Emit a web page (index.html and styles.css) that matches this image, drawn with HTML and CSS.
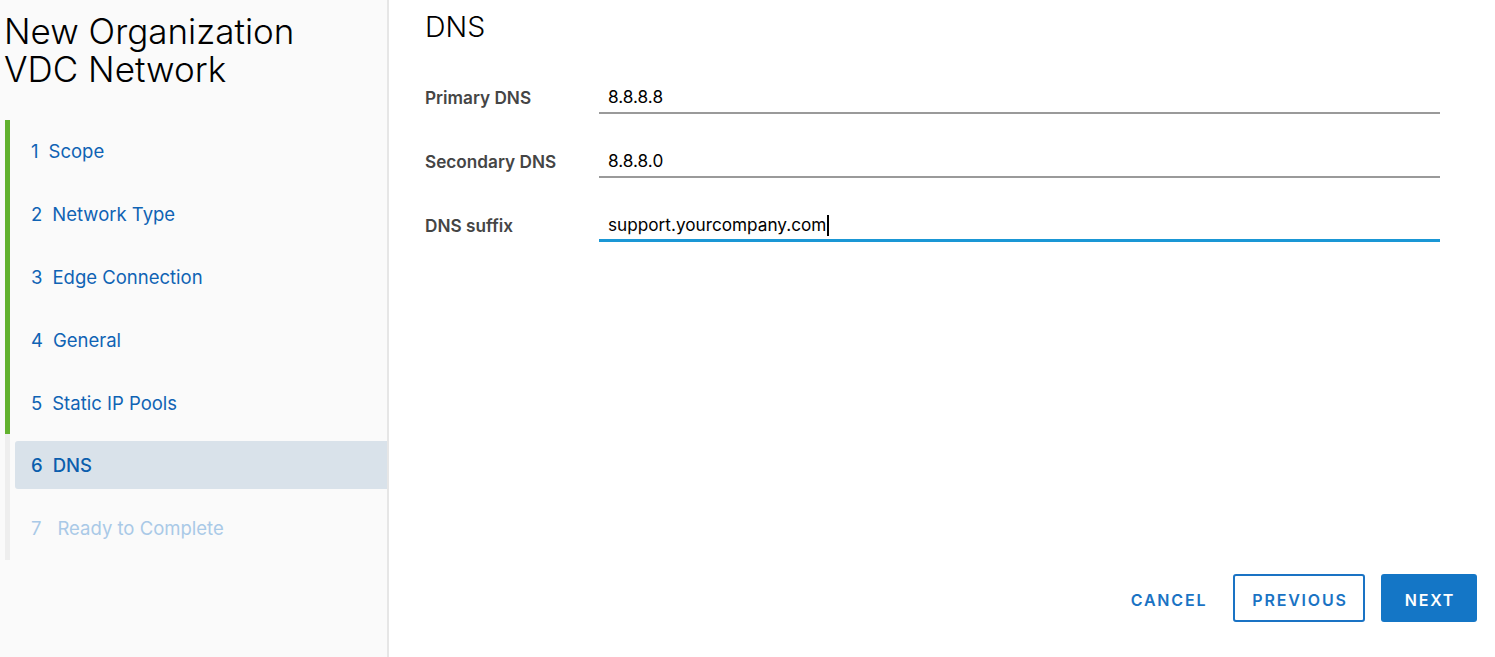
FILE: index.html
```html
<!DOCTYPE html>
<html lang="en">
<head>
<meta charset="utf-8">
<title>New Organization VDC Network</title>
<link rel="stylesheet" href="styles.css">
</head>
<body>
<div class="wizard">
  <aside class="sidebar">
    <h1 class="title">New Organization<br>VDC Network</h1>
    <nav class="steps">
      <div class="step done"><a class="link"><span class="num">1</span>Scope</a></div>
      <div class="step done"><a class="link"><span class="num">2</span>Network Type</a></div>
      <div class="step done"><a class="link"><span class="num">3</span>Edge Connection</a></div>
      <div class="step done"><a class="link"><span class="num">4</span>General</a></div>
      <div class="step done"><a class="link"><span class="num">5</span>Static IP Pools</a></div>
      <div class="step"><a class="link active"><span class="num">6</span>DNS</a></div>
      <div class="step"><a class="link disabled"><span class="num wide">7</span>Ready to Complete</a></div>
    </nav>
  </aside>
  <main class="content">
    <h2 class="heading">DNS</h2>
    <form class="form">
      <div class="row">
        <label class="label">Primary DNS</label>
        <div class="field"><span class="value">8.8.8.8</span></div>
      </div>
      <div class="row">
        <label class="label">Secondary DNS</label>
        <div class="field"><span class="value">8.8.8.0</span></div>
      </div>
      <div class="row">
        <label class="label">DNS suffix</label>
        <div class="field focused"><span class="value">support.yourcompany.com</span><span class="caret"></span></div>
      </div>
    </form>
    <div class="actions">
      <button class="btn btn-link" type="button">CANCEL</button>
      <button class="btn btn-outline" type="button">PREVIOUS</button>
      <button class="btn btn-primary" type="button">NEXT</button>
    </div>
  </main>
</div>
</body>
</html>
```

FILE: styles.css
```css
* { box-sizing: border-box; }
html, body { margin: 0; height: 100%; }
body {
  font-family: Inter, "Noto Sans", sans-serif;
  background: #ffffff;
  color: #000;
  overflow: hidden;
}
.wizard {
  display: flex;
  height: 657px;
}
.sidebar {
  width: 389px;
  flex: 0 0 389px;
  background: #fafafa;
  border-right: 2px solid #e6e6e6;
  padding-top: 12px;
}
.title {
  margin: 0 0 32px 0;
  padding-left: 4px;
  font-size: 35px;
  line-height: 38px;
  font-weight: 300;
  color: #000;
  letter-spacing: 0;
}
.steps {
  display: flex;
  flex-direction: column;
  margin-left: 5px;
}
.step {
  height: 62.8px;
  border-left: 5px solid #eeeeee;
  padding-left: 5px;
  display: flex;
  align-items: center;
}
.step.done { border-left-color: #62b22f; }
.link {
  flex: 1;
  height: 48px;
  display: flex;
  align-items: center;
  padding-left: 16px;
  font-size: 18.5px;
  color: #0f63b4;
  border-radius: 3px 0 0 3px;
}
.num { margin-right: 10px; }
.num.wide { margin-right: 16px; }
.link.active {
  background: #d9e2ea;
  font-weight: 500;
  color: #0b5ead;
}
.link.disabled { color: #a9c9e7; }

.content {
  flex: 1;
  display: flex;
  flex-direction: column;
  padding: 10px 18px 35px 36px;
}
.heading {
  margin: 0;
  font-size: 28.5px;
  line-height: 34px;
  font-weight: 300;
  color: #000;
}
.form {
  display: flex;
  flex-direction: column;
  margin-top: 6px;
  width: 1015px;
}
.row {
  display: flex;
  align-items: flex-end;
  height: 64px;
}
.label {
  width: 174px;
  flex: 0 0 174px;
  font-size: 17.2px;
  line-height: 20px;
  font-weight: 600;
  color: #454545;
  padding-bottom: 6px;
}
.field {
  flex: 1;
  height: 28px;
  display: flex;
  align-items: center;
  padding: 0 0 4px 9px;
  border-bottom: 2px solid #9a9a9a;
  font-size: 17.2px;
  line-height: 20px;
  color: #000;
}
.field.focused {
  border-bottom: 3px solid #1a97d5;
  padding-bottom: 3px;
}
.caret {
  display: inline-block;
  width: 2px;
  height: 21px;
  background: #000;
  margin-left: 1px;
}
.actions {
  margin-top: auto;
  display: flex;
  justify-content: flex-end;
  align-items: center;
  gap: 16px;
}
.btn {
  font-family: Inter, "Noto Sans", sans-serif;
  font-size: 16px;
  font-weight: 600;
  letter-spacing: 1.8px;
  height: 48px;
  border-radius: 3px;
  cursor: pointer;
  padding: 3px 0 0 2px;
  line-height: 20px;
}
.btn-link {
  background: transparent;
  border: none;
  color: #1a73c4;
  width: 90px;
  margin-right: 4px;
}
.btn-outline {
  background: #fff;
  border: 2px solid #1a73c4;
  color: #1a73c4;
  width: 132px;
}
.btn-primary {
  background: #1476c6;
  border: none;
  color: #fff;
  width: 96px;
}
```
